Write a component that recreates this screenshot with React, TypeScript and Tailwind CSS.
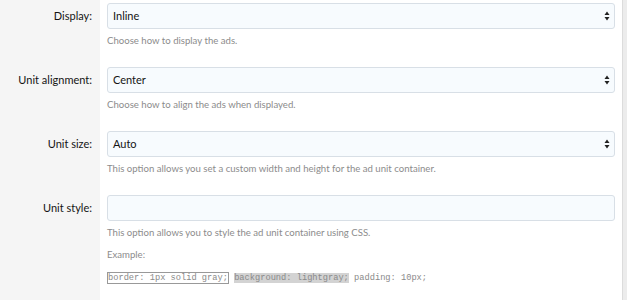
import React from "react";

const font = { fontFamily: 'Lato, "Open Sans", Arial, sans-serif' };

function SelectArrows() {
  return (
    <svg width="6" height="10" viewBox="0 0 6 10" className="absolute right-[4px] top-1/2 -translate-y-1/2">
      <path d="M3 0.5 L5.5 4 L0.5 4 Z" fill="#222" />
      <path d="M3 9.5 L5.5 6 L0.5 6 Z" fill="#222" />
    </svg>
  );
}

function Field({ label, value, select, help, children }: { label: string; value?: string; select?: boolean; help: string; children?: React.ReactNode }) {
  return (
    <div className="flex">
      <div className="w-[100px] shrink-0 bg-[#f5f5f5] pt-[3px] pr-[8px] text-right text-[11px] leading-[26px] text-[#141414]">
        {label}
      </div>
      <div className="flex-1 px-[7px] pt-[3px] pb-[15px]">
        <div className="relative h-[26px] rounded-[3px] border border-[#d8dfe6] bg-[#f7fbfe] pl-[5px] text-[11px] leading-[24px] text-[#141414]">
          {value}
          {select && <SelectArrows />}
        </div>
        <div className="mt-[4px] text-[9.6px] leading-[16px] text-[#8c8c8c]">{help}</div>
        {children}
      </div>
    </div>
  );
}

export default function App() {
  return (
    <div className="flex h-[300px] w-[627px] overflow-hidden bg-white" style={font}>
      <div className="flex-1">
        <Field label="Display:" value="Inline" select help="Choose how to display the ads." />
        <Field label="Unit alignment:" value="Center" select help="Choose how to align the ads when displayed." />
        <Field label="Unit size:" value="Auto" select help="This option allows you set a custom width and height for the ad unit container." />
        <Field label="Unit style:" help="This option allows you to style the ad unit container using CSS.">
          <div className="mt-[6px] text-[9.6px] leading-[16px] text-[#8c8c8c]">Example:</div>
          <div className="mt-[9px] text-[8.7px] leading-[12px] text-[#8a8a8a]" style={{ fontFamily: '"Liberation Mono", monospace' }}>
            <span className="border border-[#999]">border: 1px solid gray;</span>{" "}
            <span className="bg-[#d3d3d3]">background: lightgray;</span>{" "}
            <span>padding: 10px;</span>
          </div>
        </Field>
        <div className="flex h-full">
          <div className="w-[100px] bg-[#f5f5f5]" />
        </div>
      </div>
      <div className="w-[5px] border-l border-[#dcdcdc] bg-[#ececec]" />
    </div>
  );
}
